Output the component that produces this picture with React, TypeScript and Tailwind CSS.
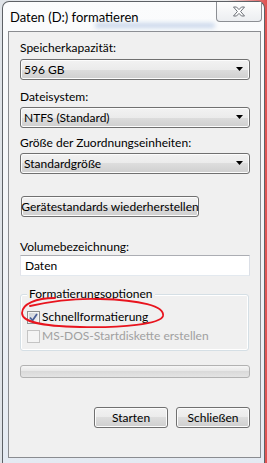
import React from "react";

function Combo({ value }: { value: string }) {
  return (
    <div className="flex h-[21px] w-[230px] items-center justify-between rounded-[3px] border border-[#707070] bg-[linear-gradient(180deg,#f2f2f2_0%,#ebebeb_50%,#dddddd_50%,#cfcfcf_100%)] pl-[3px] pr-[5px] shadow-[inset_0_0_0_1px_#fcfcfc]">
      <span className="leading-none">{value}</span>
      <svg width="8" height="5" viewBox="0 0 8 5">
        <path d="M0 0 H7 L3.5 4 Z" fill="#000" />
      </svg>
    </div>
  );
}

function Button({ label, className = "" }: { label: string; className?: string }) {
  return (
    <div
      className={`flex h-[21px] items-center justify-center whitespace-nowrap rounded-[3px] border border-[#707070] bg-[linear-gradient(180deg,#f2f2f2_0%,#ebebeb_50%,#dddddd_50%,#cfcfcf_100%)] shadow-[inset_0_0_0_1px_#fcfcfc] ${className}`}
    >
      {label}
    </div>
  );
}

function Check({ checked, disabled }: { checked?: boolean; disabled?: boolean }) {
  return (
    <div
      className={`flex h-[13px] w-[13px] shrink-0 items-center justify-center border ${
        disabled
          ? "border-[#c4c4c4] bg-[#f4f4f4]"
          : "border-[#8e8f8f] bg-[linear-gradient(135deg,#cbcfd5,#f6f6f6)] shadow-[inset_0_0_0_1px_#f4f4f4]"
      }`}
    >
      {checked && (
        <svg width="9" height="9" viewBox="0 0 9 9">
          <path d="M1 4.5 L3.5 7.5 L8 1" fill="none" stroke="#4a5f97" strokeWidth="1.8" />
        </svg>
      )}
    </div>
  );
}

export default function App() {
  return (
    <div className="relative h-[463px] w-[267px] overflow-hidden bg-[linear-gradient(90deg,#dfe3e8_0%,#f0f2f4_60%,#e8e8e8_85%,#e05050_100%)] font-['Lato',sans-serif] text-[12px] text-black">
      <div className="ml-[2px] mt-[1px] flex h-[462px] w-[263px] flex-col rounded-t-[7px] border border-b-0 border-[#5d6166] bg-[linear-gradient(180deg,#fbfcfd_0%,#f2f4f7_45%,#e4eaf2_100%)]">
        {/* title bar */}
        <div className="relative flex h-[29px] justify-between">
          <span className="pl-[7px] pt-[6px] text-[13px] leading-[18px]">Daten (D:) formatieren</span>
          <div className="absolute left-[92px] top-[21px] h-[5px] w-[120px] rounded-full bg-[#c9d7eb] blur-[2px]" />
          <div className="relative mr-[2px] flex h-[20px] w-[46px] items-center justify-center rounded-b-[4px] border border-t-0 border-[#8c8f94] bg-[linear-gradient(180deg,#fdfdfd,#eceef1)]">
            <svg width="14" height="11" viewBox="0 0 14 11">
              <path
                d="M1.5 1 H4.5 L7 3.6 L9.5 1 H12.5 L8.6 5.5 L12.5 10 H9.5 L7 7.4 L4.5 10 H1.5 L5.4 5.5 Z"
                fill="#ffffff"
                stroke="#6d7178"
                strokeWidth="1"
                strokeLinejoin="round"
              />
            </svg>
          </div>
        </div>

        {/* client area */}
        <div className="ml-[5px] mr-[3px] flex h-[427px] w-[253px] flex-col border border-[#8a8c90] bg-[#f0f0f0] pl-[11px]">
          <div className="mt-[8px] leading-[16px]">Speicherkapazität:</div>
          <div className="mt-[3px]">
            <Combo value="596 GB" />
          </div>
          <div className="mt-[9px] leading-[16px]">Dateisystem:</div>
          <div className="mt-[2px]">
            <Combo value="NTFS (Standard)" />
          </div>
          <div className="mt-[7px] leading-[16px]">Größe der Zuordnungseinheiten:</div>
          <div className="mt-[2px]">
            <Combo value="Standardgröße" />
          </div>
          <Button label="Gerätestandards wiederherstellen" className="ml-[1px] mt-[22px] w-[178px]" />
          <div className="mt-[22px] leading-[16px]">Volumebezeichnung:</div>
          <div className="flex h-[21px] w-[230px] items-center border border-[#abadb3] border-b-[#e3e9ef] border-l-[#e2e3ea] border-r-[#dbdfe6] bg-white pl-[4px]">
            Daten
          </div>

          {/* group box */}
          <div className="relative mt-[18px] flex h-[57px] w-[229px] flex-col gap-[5px] rounded-[3px] border border-[#d5dfe5] pl-[6px] pt-[15px] shadow-[inset_0_0_0_1px_#ffffff]">
            <span className="absolute -top-[9px] left-[6px] bg-[#f0f0f0] px-[2px] leading-[16px]">
              Formatierungsoptionen
            </span>
            <div className="flex items-center gap-[2px]">
              <Check checked />
              <span className="leading-[14px]">Schnellformatierung</span>
            </div>
            <div className="flex items-center gap-[2px]">
              <Check disabled />
              <span className="leading-[14px] text-[#a0a0a0]">MS-DOS-Startdiskette erstellen</span>
            </div>
          </div>

          {/* progress */}
          <div className="mt-[14px] h-[13px] w-[230px] rounded-[3px] border border-[#b2b2b2] bg-[linear-gradient(180deg,#f6f6f6_0%,#e6e6e6_50%,#dadada_50%,#e4e4e4_100%)]" />

          <div className="mt-[29px] flex gap-[8px] pl-[74px]">
            <Button label="Starten" className="w-[74px]" />
            <Button label="Schließen" className="w-[74px]" />
          </div>
        </div>
        <div className="flex-1" />
      </div>

      {/* red hand-drawn annotation */}
      <svg className="pointer-events-none absolute inset-0" width="267" height="463" viewBox="0 0 267 463">
        <path
          d="M55 298 C36 298 22 304 22 313 C22 322 40 326 80 327 C122 328 161 324 163 316 C165 306 140 300 100 299 C76 298 52 301 30 306"
          fill="none"
          stroke="#e8141e"
          strokeWidth="1.8"
          strokeLinecap="round"
        />
      </svg>
    </div>
  );
}
